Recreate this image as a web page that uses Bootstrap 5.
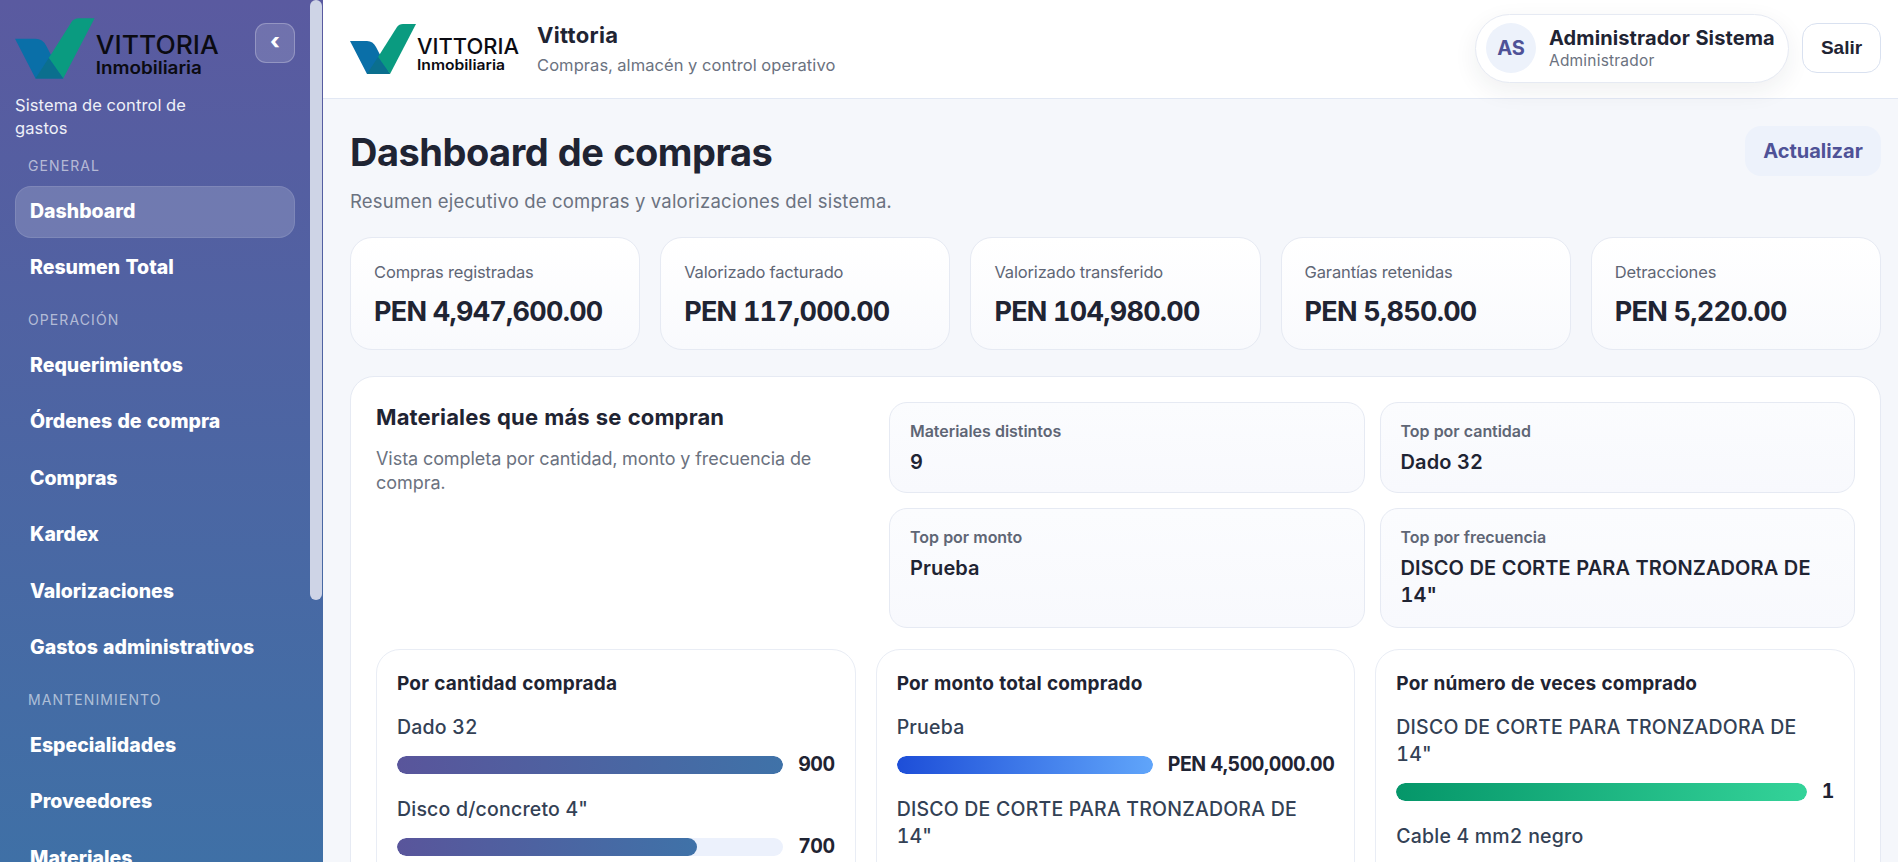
<!DOCTYPE html>
<html lang="es">
<head>
  <meta charset="UTF-8">
  <meta name="viewport" content="width=device-width, initial-scale=1.0"/>
  <title>Vittoria - Dashboard de compras</title>
  <link href="https://cdn.jsdelivr.net/npm/bootstrap@5.3.0/dist/css/bootstrap.min.css" rel="stylesheet"/>
  <style>
    html, body { height: 100%; overflow: hidden; }
    body {
      background-color: #f5f7fb;
      color: #1f2433;
      font-family: Inter, "Noto Sans", sans-serif;
      font-variant-numeric: tabular-nums;
    }
    .marco-app { height: 862px; }

    /* barra lateral */
    .lateral {
      width: 323px;
      flex: 0 0 323px;
      height: 862px;
      overflow: hidden;
      background: linear-gradient(180deg, #5a5aa0 0%, #3f70a6 100%);
      color: #fff;
    }
    .lateral-interno { width: 310px; padding: 18px 15px 0; }
    .pulgar-scroll {
      position: absolute; top: 0; left: 310px;
      width: 12px; height: 600px;
      background: #ced4e6; border-radius: 6px;
    }
    .logo-lateral { width: 205px; height: 62px; display: block; flex: none; }
    .btn-colapsar {
      width: 40px; height: 40px; margin-top: 5px;
      background: rgba(255,255,255,.14);
      border: 1px solid rgba(255,255,255,.25);
      border-radius: 11px;
      color: #fff;
      font-size: 22px; font-weight: 800; line-height: 1; padding: 0 0 4px;
    }
    .lema { font-size: 16.5px; line-height: 23px; width: 190px; margin: 14px 0 0; color: #eef0f8; letter-spacing: .1px; }
    .seccion-nav {
      font-size: 14px; letter-spacing: 1.1px; line-height: 18px;
      color: rgba(255,255,255,.58); padding-left: 13px; text-transform: uppercase;
      margin: 16.5px 0 11px;
    }
    .item-nav {
      display: flex; align-items: center;
      height: 52px; margin-bottom: 4.5px;
      padding: 0 14px; border: 1px solid transparent; border-radius: 16px;
      color: #fff; font-size: 19.5px; font-weight: 800; letter-spacing: 0; text-decoration: none;
    }
    .item-nav.activo { background: rgba(255,255,255,.17); border-color: rgba(255,255,255,.1); }

    /* cabecera */
    .cuerpo { min-width: 0; height: 862px; overflow: hidden; }
    .cabecera { height: 99px; padding: 0 17px 0 27px; background: #fff; border-bottom: 1px solid #e2e8f4; }
    .marca-grupo { gap: 17px; }
    .logo-cabecera { width: 170px; height: 51px; display: block; }
    .marca-titulo { font-size: 22px; font-weight: 700; line-height: 26px; letter-spacing: .3px; }
    .marca-sub { font-size: 16.5px; line-height: 24px; color: #6b7280; margin-top: 5px; letter-spacing: .08px; }
    .grupo-usuario { gap: 13px; padding-bottom: 2px; }
    .pastilla-usuario {
      height: 69px; width: 314px; padding: 0 10px; gap: 13px;
      background: #fff; border: 1px solid #e6eaf3; border-radius: 35px;
      box-shadow: 0 8px 24px rgba(31,36,51,.07);
    }
    .avatar-usuario {
      width: 50px; height: 50px; border-radius: 50%; flex: none;
      background: #edf2fb; color: #4f5297; font-size: 20px; font-weight: 700;
    }
    .usuario-nombre { font-size: 20px; font-weight: 700; line-height: 24px; white-space: nowrap; letter-spacing: .1px; }
    .usuario-rol { font-size: 15.5px; line-height: 21px; color: #6b7280; letter-spacing: .2px; }
    .btn-salir {
      width: 79px; height: 50px; padding: 0;
      background: #fff; border: 1px solid #d9e1f0; border-radius: 15px;
      color: #1f2433; font-family: "Liberation Sans", sans-serif; font-size: 19px; font-weight: 700;
    }

    /* contenido */
    .contenido { padding: 27px 17px 0 27px; }
    .titulo-pagina { font-size: 38px; font-weight: 700; line-height: 52px; margin: 0; letter-spacing: -.5px; }
    .sub-pagina { font-size: 18.5px; line-height: 26px; color: #6b7280; margin: 10px 0 0; letter-spacing: .22px; }
    .btn-actualizar {
      width: 136px; height: 50px; padding: 0 0 0 0;
      background: #edf2fb; border: 0; border-radius: 16px;
      color: #4f5297; font-size: 20px; font-weight: 700;
    }
    .fila-kpi { display: grid; grid-template-columns: repeat(5, 1fr); gap: 20px; margin-top: 23px; }
    .tarjeta-kpi {
      height: 113px; padding: 22px 23px;
      background: linear-gradient(180deg, #fff 0%, #f9fafd 100%);
      border: 1px solid #e6eaf3; border-radius: 22px;
    }
    .kpi-etiqueta { font-size: 16.5px; line-height: 24px; color: #5f6675; letter-spacing: -.15px; }
    .kpi-valor { font-size: 27px; font-weight: 700; line-height: 36px; margin-top: 10px; letter-spacing: -.75px; }

    .panel-materiales {
      margin-top: 26px; padding: 25px;
      background: #fff; border: 1px solid #e6eaf3; border-radius: 24px;
    }
    .panel-izq { width: 513px; flex: 0 0 513px; padding-right: 50px; }
    .panel-titulo { font-size: 22px; font-weight: 700; line-height: 30px; margin: 0; letter-spacing: .15px; }
    .panel-desc { font-size: 18px; line-height: 24px; color: #6b7280; margin: 15px 0 0; letter-spacing: -.05px; }
    .rejilla-stats { display: grid; grid-template-columns: 1fr 1fr; grid-template-rows: 91px 120px; gap: 15px; flex: 1; }
    .caja-stat {
      padding: 17px 20px;
      background: linear-gradient(180deg, #fbfcfe 0%, #f8f9fd 100%);
      border: 1px solid #e6eaf3; border-radius: 18px;
    }
    .stat-etiqueta { font-size: 16px; line-height: 22px; color: #5f6675; font-weight: 600; letter-spacing: -.05px; }
    .stat-valor { font-size: 20px; line-height: 27px; font-weight: 600; margin-top: 7px; letter-spacing: .1px; }

    .fila-rankings { display: grid; grid-template-columns: repeat(3, 1fr); gap: 20px; margin-top: 21px; }
    .tarjeta-ranking { padding: 20px; height: 400px; background: #fff; border: 1px solid #e9edf5; border-radius: 24px; }
    .ranking-titulo { font-size: 19px; font-weight: 700; line-height: 27px; margin: 0 0 17px; letter-spacing: .16px; }
    .ranking-nombre { font-size: 19.5px; font-weight: 500; line-height: 27px; color: #334155; margin-bottom: 10px; letter-spacing: .2px; }
    .ranking-fila { gap: 15px; margin-bottom: 18px; }
    .ranking-valor { font-size: 19.5px; font-weight: 700; line-height: 27px; white-space: nowrap; letter-spacing: -.45px; }
    .pista-barra { flex: 1; height: 18px; border-radius: 9px; background: #ecf1fc; overflow: hidden; }
    .relleno-barra { height: 100%; border-radius: 9px; }
    .barra-morada { background: linear-gradient(90deg, #59559b, #3f72a8); }
    .barra-azul { background: linear-gradient(90deg, #1d4ed8, #60a5fa); }
    .barra-verde { background: linear-gradient(90deg, #059669, #34d399); }
  </style>
</head>
<body>

<div class="marco-app d-flex">
  <aside class="lateral position-relative">
    <div class="lateral-interno">
      <div class="d-flex justify-content-between align-items-start">
        <svg class="logo-lateral" viewBox="0 0 170 51">
          <path d="M0 17H17Q23 17 26 23L40 50H17Z" fill="#0a6fa8"/>
          <path d="M47 3Q49 0 53 0H66L40 50L28 33Z" fill="#0a9b80"/>
          <path d="M28 33L40 50H17Z" fill="#0b6f8e"/>
          <text x="67" y="30" font-family="Inter, sans-serif" font-size="21" font-weight="500" textLength="102" lengthAdjust="spacingAndGlyphs" fill="#0b0b12">VITTORIA</text>
          <text x="67" y="46" font-family="Inter, sans-serif" font-size="14.5" font-weight="600" textLength="88" lengthAdjust="spacingAndGlyphs" fill="#0b0b12">Inmobiliaria</text>
        </svg>
        <button class="btn-colapsar" type="button">‹</button>
      </div>
      <p class="lema">Sistema de control de gastos</p>
      <div class="seccion-nav">General</div>
      <a class="item-nav activo" href="#">Dashboard</a>
      <a class="item-nav" href="#">Resumen Total</a>
      <div class="seccion-nav">Operación</div>
      <a class="item-nav" href="#">Requerimientos</a>
      <a class="item-nav" href="#">Órdenes de compra</a>
      <a class="item-nav" href="#">Compras</a>
      <a class="item-nav" href="#">Kardex</a>
      <a class="item-nav" href="#">Valorizaciones</a>
      <a class="item-nav" href="#">Gastos administrativos</a>
      <div class="seccion-nav">Mantenimiento</div>
      <a class="item-nav" href="#">Especialidades</a>
      <a class="item-nav" href="#">Proveedores</a>
      <a class="item-nav" href="#">Materiales</a>
    </div>
    <div class="pulgar-scroll"></div>
  </aside>

  <div class="cuerpo flex-grow-1">
    <header class="cabecera d-flex align-items-center justify-content-between">
      <div class="marca-grupo d-flex align-items-center">
        <svg class="logo-cabecera" viewBox="0 0 170 51">
          <path d="M0 17H17Q23 17 26 23L40 50H17Z" fill="#0a6fa8"/>
          <path d="M47 3Q49 0 53 0H66L40 50L28 33Z" fill="#0a9b80"/>
          <path d="M28 33L40 50H17Z" fill="#0b6f8e"/>
          <text x="67" y="30" font-family="Inter, sans-serif" font-size="21" font-weight="500" textLength="102" lengthAdjust="spacingAndGlyphs" fill="#0b0b12">VITTORIA</text>
          <text x="67" y="46" font-family="Inter, sans-serif" font-size="14.5" font-weight="600" textLength="88" lengthAdjust="spacingAndGlyphs" fill="#0b0b12">Inmobiliaria</text>
        </svg>
        <div>
          <div class="marca-titulo">Vittoria</div>
          <div class="marca-sub">Compras, almacén y control operativo</div>
        </div>
      </div>
      <div class="grupo-usuario d-flex align-items-center">
        <div class="pastilla-usuario d-flex align-items-center">
          <div class="avatar-usuario d-flex align-items-center justify-content-center">AS</div>
          <div>
            <div class="usuario-nombre">Administrador Sistema</div>
            <div class="usuario-rol">Administrador</div>
          </div>
        </div>
        <button class="btn-salir" type="button">Salir</button>
      </div>
    </header>

    <main class="contenido">
      <div class="d-flex justify-content-between align-items-start">
        <div>
          <h1 class="titulo-pagina">Dashboard de compras</h1>
          <p class="sub-pagina">Resumen ejecutivo de compras y valorizaciones del sistema.</p>
        </div>
        <button class="btn-actualizar" type="button">Actualizar</button>
      </div>

      <div class="fila-kpi">
        <div class="tarjeta-kpi"><div class="kpi-etiqueta">Compras registradas</div><div class="kpi-valor">PEN 4,947,600.00</div></div>
        <div class="tarjeta-kpi"><div class="kpi-etiqueta">Valorizado facturado</div><div class="kpi-valor">PEN 117,000.00</div></div>
        <div class="tarjeta-kpi"><div class="kpi-etiqueta">Valorizado transferido</div><div class="kpi-valor">PEN 104,980.00</div></div>
        <div class="tarjeta-kpi"><div class="kpi-etiqueta">Garantías retenidas</div><div class="kpi-valor">PEN 5,850.00</div></div>
        <div class="tarjeta-kpi"><div class="kpi-etiqueta">Detracciones</div><div class="kpi-valor">PEN 5,220.00</div></div>
      </div>

      <section class="panel-materiales">
        <div class="d-flex">
          <div class="panel-izq">
            <h2 class="panel-titulo">Materiales que más se compran</h2>
            <p class="panel-desc">Vista completa por cantidad, monto y frecuencia de compra.</p>
          </div>
          <div class="rejilla-stats">
            <div class="caja-stat"><div class="stat-etiqueta">Materiales distintos</div><div class="stat-valor">9</div></div>
            <div class="caja-stat"><div class="stat-etiqueta">Top por cantidad</div><div class="stat-valor">Dado 32</div></div>
            <div class="caja-stat"><div class="stat-etiqueta">Top por monto</div><div class="stat-valor">Prueba</div></div>
            <div class="caja-stat"><div class="stat-etiqueta">Top por frecuencia</div><div class="stat-valor">DISCO DE CORTE PARA TRONZADORA DE 14"</div></div>
          </div>
        </div>

        <div class="fila-rankings">
          <div class="tarjeta-ranking">
            <h3 class="ranking-titulo">Por cantidad comprada</h3>
            <div class="ranking-nombre">Dado 32</div>
            <div class="ranking-fila d-flex align-items-center">
              <div class="pista-barra"><div class="relleno-barra barra-morada" style="width:100%"></div></div>
              <div class="ranking-valor">900</div>
            </div>
            <div class="ranking-nombre">Disco d/concreto 4"</div>
            <div class="ranking-fila d-flex align-items-center">
              <div class="pista-barra"><div class="relleno-barra barra-morada" style="width:77.8%"></div></div>
              <div class="ranking-valor">700</div>
            </div>
          </div>
          <div class="tarjeta-ranking">
            <h3 class="ranking-titulo">Por monto total comprado</h3>
            <div class="ranking-nombre">Prueba</div>
            <div class="ranking-fila d-flex align-items-center">
              <div class="pista-barra"><div class="relleno-barra barra-azul" style="width:100%"></div></div>
              <div class="ranking-valor">PEN 4,500,000.00</div>
            </div>
            <div class="ranking-nombre">DISCO DE CORTE PARA TRONZADORA DE 14"</div>
          </div>
          <div class="tarjeta-ranking">
            <h3 class="ranking-titulo">Por número de veces comprado</h3>
            <div class="ranking-nombre">DISCO DE CORTE PARA TRONZADORA DE 14"</div>
            <div class="ranking-fila d-flex align-items-center">
              <div class="pista-barra"><div class="relleno-barra barra-verde" style="width:100%"></div></div>
              <div class="ranking-valor">1</div>
            </div>
            <div class="ranking-nombre">Cable 4 mm2 negro</div>
          </div>
        </div>
      </section>
    </main>
  </div>
</div>

<script src="https://cdn.jsdelivr.net/npm/bootstrap@5.3.0/dist/js/bootstrap.bundle.min.js"></script>
</body>
</html>
